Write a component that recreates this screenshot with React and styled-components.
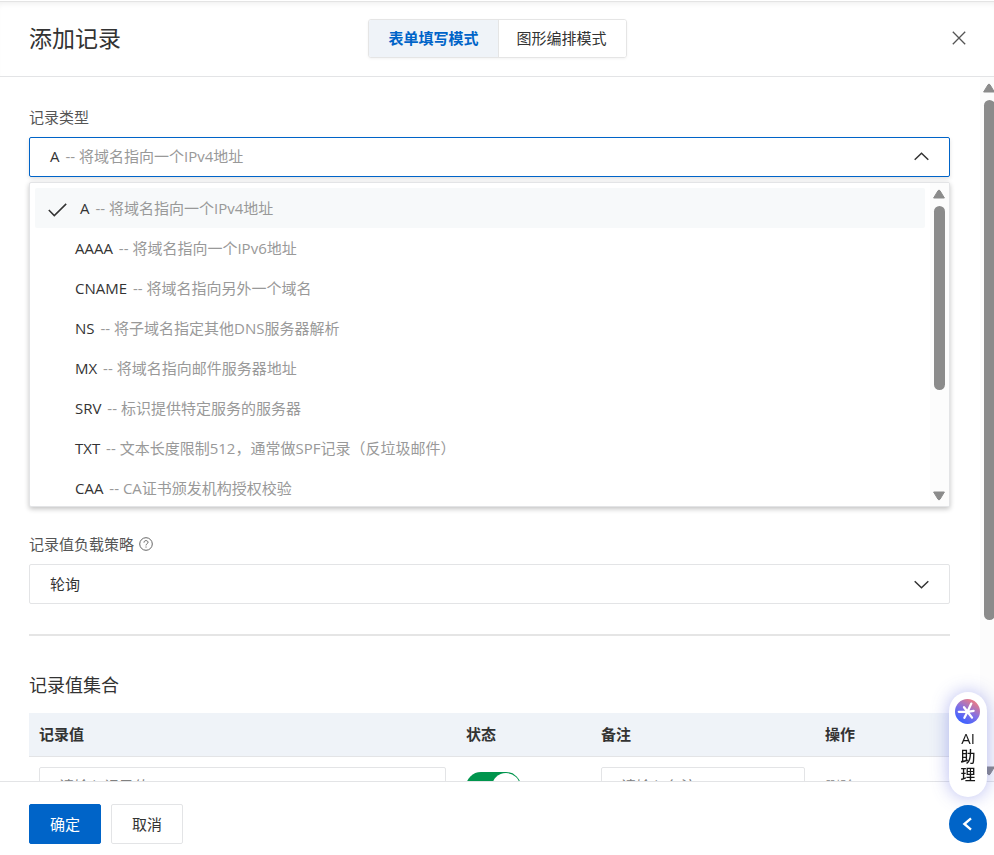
import React, { useState } from "react";
import styled, { createGlobalStyle } from "styled-components";

const GlobalStyle = createGlobalStyle`
  * {
    box-sizing: border-box;
  }
  body {
    margin: 0;
    background: #fff;
    color: #333;
    font: 15px/20px "Open Sans", "Noto Sans CJK SC", sans-serif;
  }
  button,
  input,
  select {
    font: inherit;
    color: inherit;
  }
`;

const Drawer = styled.div`
  display: flex;
  flex-direction: column;
  height: 100vh;
  overflow: hidden;
`;

const Header = styled.header`
  display: grid;
  grid-template-columns: 1fr auto 1fr;
  align-items: center;
  flex: none;
  height: 77px;
  padding: 0 28px 0 29px;
  border-bottom: 1px solid #e3e4e6;
  box-shadow: inset 0 1px 0 #fff, inset 0 2px 0 #e4e4e4, inset 0 7px 6px -4px #ececec;
`;

const Title = styled.h1`
  margin: 0;
  font-size: 23px;
  font-weight: 400;
  line-height: 30px;
`;

const ModeSwitch = styled.div`
  display: flex;
  border: 1px solid #e5e5e5;
  border-radius: 3px;
  box-shadow: 0 1px 3px rgba(0, 0, 0, 0.05);
  overflow: hidden;
`;

const ModeButton = styled.button`
  height: 37px;
  padding: 0 19px;
  border: 0;
  background: ${p => (p.$active ? "#eff3f8" : "#fff")};
  color: ${p => (p.$active ? "#0064c8" : "#333")};
  font-weight: ${p => (p.$active ? 700 : 400)};

  & + & {
    border-left: 1px solid #e5e5e5;
    padding: 0 19px 0 18px;
  }
`;

const CloseButton = styled.button`
  justify-self: end;
  display: flex;
  padding: 0;
  border: 0;
  background: none;
  color: #555;
`;

const Body = styled.div`
  display: flex;
  flex: 1;
  min-height: 0;
`;

const Content = styled.main`
  flex: 1;
  min-width: 0;
  padding: 30px 30px 0 29px;
  overflow: hidden;
`;

const ScrollTrack = styled.div`
  display: flex;
  flex-direction: column;
  align-items: center;
  flex: none;
  width: ${p => (p.$page ? 14 : 19)}px;
  padding: ${p => (p.$page ? "6px 0 5px 4px" : "6px 1px 5px 0")};
  background: #fcfcfc;
  color: #8b8b8b;
  overflow: hidden;

  svg {
    flex: none;
  }
`;

const ScrollThumb = styled.div`
  flex: 0 0 ${p => p.$size}%;
  width: 11px;
  margin: 7px 0 auto;
  border-radius: 6px;
  background: #8b8b8b;
`;

const Field = styled.div`
  margin-bottom: ${p => (p.$last ? 30 : 27)}px;
`;

const Label = styled.label`
  display: flex;
  align-items: center;
  gap: 5px;
  margin-bottom: 10px;
  color: #555;
`;

const Combo = styled.button`
  display: flex;
  align-items: center;
  justify-content: space-between;
  width: 100%;
  height: 40px;
  padding: 0 20px 2px;
  border: 1px solid #0064c8;
  border-radius: 2px;
  background: #fff;
  box-shadow: 0 2px 4px rgba(0, 0, 0, 0.12);
  text-align: left;
`;

const Muted = styled.span`
  margin-left: 2px;
  color: #999;
`;

const Menu = styled.div`
  display: flex;
  height: 325px;
  margin-top: 5px;
  border: 1px solid #e3e4e6;
  border-radius: 2px;
  background: #fff;
  box-shadow: 0 2px 5px rgba(0, 0, 0, 0.24);
  overflow: hidden;
`;

const OptionList = styled.ul`
  flex: 1;
  margin: 0;
  padding: 5px;
  list-style: none;
`;

const Option = styled.li`
  display: flex;
  align-items: center;
  height: 40px;
  padding-left: ${p => (p.$selected ? 13 : 40)}px;
  border-radius: 2px;
  background: ${p => (p.$selected ? "#f7f9fa" : "#fff")};

  svg {
    flex: none;
    margin: 3px 13px 0 0;
  }
`;

const SelectWrap = styled.div`
  display: grid;
  align-items: center;

  > * {
    grid-area: 1 / 1;
  }
  svg {
    justify-self: end;
    margin-right: 21px;
    pointer-events: none;
  }
`;

const Select = styled.select`
  appearance: none;
  width: 100%;
  height: 40px;
  padding: 0 20px;
  border: 1px solid #e3e4e6;
  border-radius: 2px;
  background: #fff;
`;

const Divider = styled.hr`
  height: 2px;
  margin: 0 0 37px;
  border: 0;
  background: #e5e5e5;
`;

const SectionTitle = styled.h2`
  margin: 0 0 16px;
  font-size: 18px;
  font-weight: 400;
  line-height: 24px;
`;

const Table = styled.table`
  width: 100%;
  table-layout: fixed;
  border-collapse: separate;
  border-spacing: 0;
`;

const Th = styled.th`
  width: ${p => p.$width || "auto"};
  height: 44px;
  padding: 0 10px 2px;
  border-bottom: 1px solid #e3e4e6;
  background: #eff3f8;
  font-weight: 700;
  text-align: left;
`;

const Td = styled.td`
  padding: 10px;
  vertical-align: middle;
`;

const TextInput = styled.input`
  display: block;
  width: 100%;
  height: 40px;
  padding: 0 19px 2px;
  border: 1px solid #e3e4e6;
  border-radius: 2px;

  &::placeholder {
    color: #808080;
    opacity: 1;
  }
`;

const Toggle = styled.input`
  appearance: none;
  display: flex;
  width: 55px;
  height: 30px;
  margin: 0;
  padding: 1px;
  border-radius: 15px;
  background: #00954d;

  &::before {
    content: "";
    width: 28px;
    height: 28px;
    margin-left: auto;
    border-radius: 50%;
    background: #fff;
  }
  &:not(:checked) {
    background: #ccc;
  }
  &:not(:checked)::before {
    margin-left: 0;
  }
`;

const TextButton = styled.button`
  display: block;
  padding: 0 0 2px;
  border: 0;
  background: none;
  color: #999;
`;

const Footer = styled.footer`
  display: flex;
  gap: 10px;
  flex: none;
  padding: 22px 29px 11px;
  border-top: 1px solid #e3e4e6;
`;

const Button = styled.button`
  height: 40px;
  padding: 0 20px;
  border: 1px solid ${p => (p.$primary ? "#0064c8" : "#e3e4e6")};
  border-radius: 2px;
  background: ${p => (p.$primary ? "#0064c8" : "#fff")};
  color: ${p => (p.$primary ? "#fff" : "#333")};
`;

const FloatBar = styled.aside`
  position: fixed;
  right: 7px;
  bottom: 12px;
  display: flex;
  flex-direction: column;
  gap: 8px;
  width: 38px;
`;

const Assistant = styled.button`
  display: flex;
  flex-direction: column;
  align-items: center;
  height: 105px;
  padding: 7px 0 0;
  border: 0;
  border-radius: 19px;
  background: #fff;
  box-shadow: 0 0 18px rgba(80, 90, 220, 0.42);
  color: #181818;
  line-height: 18px;

  svg {
    margin-bottom: 5px;
  }
`;

// narrow enough that each Chinese character takes its own line
const AssistantText = styled.span`
  width: 16px;
  font-weight: 500;
  text-align: center;
`;

const Collapse = styled.button`
  display: flex;
  align-items: center;
  justify-content: center;
  height: 38px;
  padding: 0;
  border: 0;
  border-radius: 50%;
  background: #0064c8;
  color: #fff;
`;

const recordTypes = [
  { name: "A", desc: "将域名指向一个IPv4地址" },
  { name: "AAAA", desc: "将域名指向一个IPv6地址" },
  { name: "CNAME", desc: "将域名指向另外一个域名" },
  { name: "NS", desc: "将子域名指定其他DNS服务器解析" },
  { name: "MX", desc: "将域名指向邮件服务器地址" },
  { name: "SRV", desc: "标识提供特定服务的服务器" },
  { name: "TXT", desc: "文本长度限制512，通常做SPF记录（反垃圾邮件）" },
  { name: "CAA", desc: "CA证书颁发机构授权校验" }
];

const CloseIcon = () => (
  <svg width="14" height="14" viewBox="0 0 14 14" fill="none" stroke="currentColor" strokeWidth="1.3">
    <path d="M0.8 0.8L13.2 13.2M13.2 0.8L0.8 13.2" />
  </svg>
);

const Chevron = ({ up }) => (
  <svg width="15" height="9" viewBox="0 0 15 9" fill="none" stroke="#333" strokeWidth="1.5">
    <path d={up ? "M0.7 7.8L7.5 1.2L14.3 7.8" : "M0.7 1.2L7.5 7.8L14.3 1.2"} />
  </svg>
);

const CheckIcon = () => (
  <svg width="19" height="14" viewBox="0 0 19 14" fill="none" stroke="#333" strokeWidth="1.5">
    <path d="M0.8 7L6.3 12.6L18.2 0.9" />
  </svg>
);

const HelpIcon = () => (
  <svg width="14" height="14" viewBox="0 0 14 14" fill="none" stroke="#666" strokeWidth="1">
    <circle cx="7" cy="7" r="6.3" />
    <path d="M5 5.6C5 4.3 5.8 3.6 7 3.6S9 4.3 9 5.4C9 6.6 7 6.8 7 8.4" />
    <path d="M7 9.5V10.6" />
  </svg>
);

const Arrow = ({ down }) => (
  <svg width="12" height="10" viewBox="0 0 12 10" fill="currentColor" stroke="currentColor" strokeLinejoin="round">
    <path d={down ? "M0.6 1H11.4L7 8.3Q6 9.5 5 8.3Z" : "M0.6 9H11.4L7 1.7Q6 0.5 5 1.7Z"} />
  </svg>
);

const AssistantIcon = () => (
  <svg width="26" height="25" viewBox="0 0 26 25" fill="none">
    <defs>
      <linearGradient id="ai" x1="7" y1="23" x2="19" y2="3" gradientUnits="userSpaceOnUse">
        <stop offset="0" stopColor="#3f62ff" />
        <stop offset="0.5" stopColor="#8270e4" />
        <stop offset="1" stopColor="#e27a8c" />
      </linearGradient>
    </defs>
    <circle cx="12.5" cy="12.5" r="12.5" fill="url(#ai)" />
    <path
      d="M3.8 12.8H12.5M12.5 12.8L16.3 4.6M12.5 12.8L18.6 11.8M12.5 12.8L17 18.6M12.5 12.8L9.4 18.8M12.5 12.8L9 8.2"
      stroke="#fff"
      strokeWidth="2.3"
      strokeLinecap="round"
    />
  </svg>
);

const LeftIcon = () => (
  <svg width="12" height="14" viewBox="0 0 12 14" fill="none" stroke="currentColor" strokeWidth="2.4">
    <path d="M9 1.4L2.4 7L9 12.6" />
  </svg>
);

const Scrollbar = ({ page, size }) => (
  <ScrollTrack $page={page} aria-hidden="true">
    <Arrow />
    <ScrollThumb $size={size} />
    <Arrow down />
  </ScrollTrack>
);

const RecordText = ({ item }) => (
  <span>
    {item.name} <Muted>-- {item.desc}</Muted>
  </span>
);

export default function App() {
  const [mode, setMode] = useState("form");
  const [type, setType] = useState("A");
  const [enabled, setEnabled] = useState(true);
  const current = recordTypes.find(item => item.name === type);

  return (
    <Drawer>
      <GlobalStyle />
      <Header>
        <Title>添加记录</Title>
        <ModeSwitch>
          <ModeButton $active={mode === "form"} onClick={() => setMode("form")}>
            表单填写模式
          </ModeButton>
          <ModeButton $active={mode === "graph"} onClick={() => setMode("graph")}>
            图形编排模式
          </ModeButton>
        </ModeSwitch>
        <CloseButton aria-label="关闭">
          <CloseIcon />
        </CloseButton>
      </Header>

      <Body>
        <Content>
          <Field>
            <Label htmlFor="record-type">记录类型</Label>
            <Combo
              id="record-type"
              role="combobox"
              aria-haspopup="listbox"
              aria-expanded="true"
              aria-controls="record-type-list">
              <RecordText item={current} />
              <Chevron up />
            </Combo>
            <Menu>
              <OptionList id="record-type-list" role="listbox">
                {recordTypes.map(item => (
                  <Option
                    key={item.name}
                    role="option"
                    aria-selected={item.name === type}
                    $selected={item.name === type}
                    onClick={() => setType(item.name)}>
                    {item.name === type && <CheckIcon />}
                    <RecordText item={item} />
                  </Option>
                ))}
              </OptionList>
              <Scrollbar size={59} />
            </Menu>
          </Field>

          <Field $last>
            <Label htmlFor="policy">
              记录值负载策略
              <HelpIcon />
            </Label>
            <SelectWrap>
              <Select id="policy" defaultValue="rr">
                <option value="rr">轮询</option>
              </Select>
              <Chevron />
            </SelectWrap>
          </Field>

          <Divider />

          <SectionTitle>记录值集合</SectionTitle>
          <Table>
            <thead>
              <tr>
                <Th>记录值</Th>
                <Th $width="135px">状态</Th>
                <Th $width="224px">备注</Th>
                <Th $width="135px">操作</Th>
              </tr>
            </thead>
            <tbody>
              <tr>
                <Td>
                  <TextInput aria-label="记录值" placeholder="请输入记录值" />
                </Td>
                <Td>
                  <Toggle
                    type="checkbox"
                    role="switch"
                    aria-label="状态"
                    checked={enabled}
                    onChange={e => setEnabled(e.target.checked)}
                  />
                </Td>
                <Td>
                  <TextInput aria-label="备注" placeholder="请输入备注" />
                </Td>
                <Td>
                  <TextButton disabled>删除</TextButton>
                </Td>
              </tr>
            </tbody>
          </Table>
        </Content>
        <Scrollbar page size={75} />
      </Body>

      <Footer>
        <Button $primary>确定</Button>
        <Button>取消</Button>
      </Footer>

      <FloatBar>
        <Assistant>
          <AssistantIcon />
          <AssistantText>AI助理</AssistantText>
        </Assistant>
        <Collapse aria-label="收起">
          <LeftIcon />
        </Collapse>
      </FloatBar>
    </Drawer>
  );
}
